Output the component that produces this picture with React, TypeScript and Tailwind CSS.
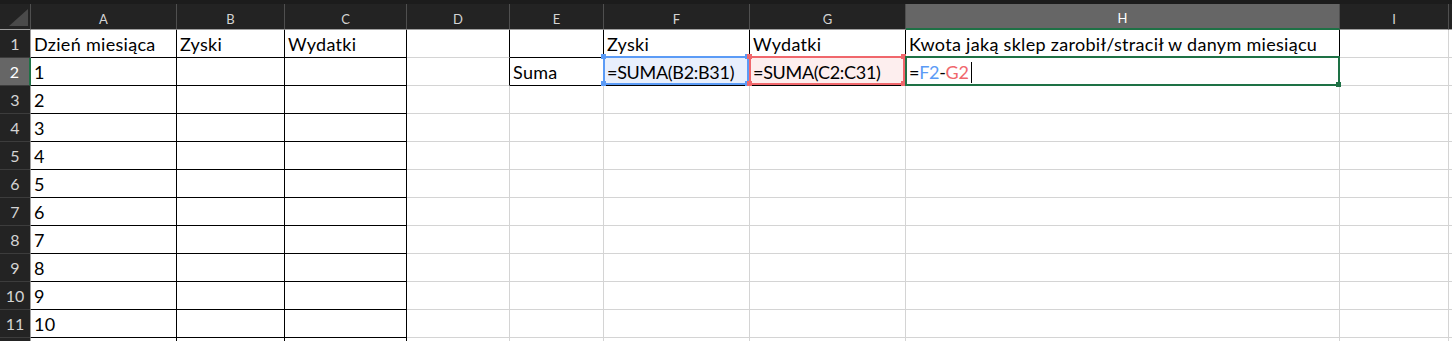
import React from "react";

const LETTERS = ["A", "B", "C", "D", "E", "F", "G", "H", "I", "J"];
const ROWS = 12;

const GRID =
  "grid grid-cols-[31px_146px_108px_122px_103px_94px_146px_156px_434px_109px_1fr]";

// teksty w komórkach, klucz: "wiersz-kolumna" (kolumna 0 = A)
const cells: Record<string, React.ReactNode> = {
  "1-0": "Dzień miesiąca",
  "1-1": "Zyski",
  "1-2": "Wydatki",
  "1-5": "Zyski",
  "1-6": "Wydatki",
  "1-7": "Kwota jaką sklep zarobił/stracił w danym miesiącu",
  "2-4": "Suma",
  "2-5": "=SUMA(B2:B31)",
  "2-6": "=SUMA(C2:C31)",
  "2-7": (
    <>
      =<span className="text-[#5b9bf6]">F2</span>-
      <span className="text-[#f0676c]">G2</span>
      <span className="ml-[2px] inline-block h-[21px] w-[1px] bg-black align-middle" />
    </>
  ),
};
// wiersz 12 jest prawie cały ucięty, więc bez tekstu
for (let r = 2; r < ROWS; r++) cells[`${r}-0`] = String(r - 1);

const formulas = new Set(["2-5", "2-6", "2-7"]);

function blackRight(r: number, c: number) {
  if (c <= 2) return true;
  if (r <= 2 && c >= 3 && c <= 7) return true;
  return false;
}

function blackBottom(r: number, c: number) {
  if (c <= 2) return true;
  if (r <= 2 && c >= 4 && c <= 7) return true;
  return false;
}

function Corner() {
  return (
    <div className="flex h-[26px] items-end justify-end border-r border-b border-r-[#4f4f4f] border-b-[#a0a0a0] bg-[#232323] pr-[2px] pb-[3px]">
      <svg width="19" height="17" viewBox="0 0 19 17">
        <polygon points="19,0 19,17 0,17" fill="#4a4a4a" />
      </svg>
    </div>
  );
}

function ColHeader({ letter }: { letter: string }) {
  const active = letter === "H";
  return (
    <div
      className={
        active
          ? "flex h-[26px] items-end justify-center border-r border-b-2 border-r-[#4f4f4f] border-b-[#1e7145] bg-[#666666] pb-[2px] text-[13px] leading-[16px] text-white"
          : "flex h-[26px] items-end justify-center border-r border-b border-r-[#4f4f4f] border-b-[#a0a0a0] bg-[#232323] pb-[2px] text-[13px] leading-[16px] text-[#d4d4d4]"
      }
    >
      {letter === "J" ? "" : letter}
    </div>
  );
}

function RowHeader({ n }: { n: number }) {
  const active = n === 2;
  return (
    <div
      className={
        active
          ? "flex h-[28px] items-center justify-center border-r-2 border-b border-r-[#1e7145] border-b-[#3c3c3c] bg-[#666666] pt-[1px] text-[16px] leading-[20px] text-white"
          : "flex h-[28px] items-center justify-center border-r border-b border-r-[#a0a0a0] border-b-[#3c3c3c] bg-[#232323] pt-[1px] text-[16px] leading-[20px] text-[#d4d4d4]"
      }
    >
      {n < ROWS ? n : ""}
    </div>
  );
}

function BlueRange() {
  return (
    <div className="pointer-events-none absolute -top-[2px] right-0 bottom-0 -left-[1px] z-10">
      <div className="absolute inset-0 border-2 border-[#5b9bf6]" />
      <div className="absolute -top-[2px] -left-[2px] h-[5px] w-[5px] bg-[#5b9bf6]" />
      <div className="absolute -top-[2px] -right-[1px] h-[5px] w-[5px] bg-[#5b9bf6]" />
      <div className="absolute -bottom-[1px] -left-[2px] h-[5px] w-[5px] bg-[#5b9bf6]" />
      <div className="absolute -right-[1px] -bottom-[1px] h-[5px] w-[5px] bg-[#5b9bf6]" />
    </div>
  );
}

function RedRange() {
  return (
    <div className="pointer-events-none absolute -top-[2px] right-0 bottom-0 -left-[1px] z-20">
      <div className="absolute inset-0 border-2 border-[#f0676c]" />
      <div className="absolute -top-[2px] -left-[2px] h-[5px] w-[5px] bg-[#f0676c]" />
      <div className="absolute -top-[2px] -right-[1px] h-[5px] w-[5px] bg-[#f0676c]" />
      <div className="absolute -bottom-[1px] -left-[2px] h-[5px] w-[5px] bg-[#f0676c]" />
      <div className="absolute -right-[1px] -bottom-[1px] h-[5px] w-[5px] bg-[#f0676c]" />
    </div>
  );
}

function ActiveCell() {
  return (
    <div className="pointer-events-none absolute -top-[2px] -right-[1px] -bottom-[1px] -left-[1px] z-30">
      <div className="absolute inset-0 border-2 border-[#1e7145]" />
      <div className="absolute -right-[1px] -bottom-[1px] h-[5px] w-[5px] bg-[#1e7145]" />
    </div>
  );
}

function Cell({ r, c }: { r: number; c: number }) {
  const key = `${r}-${c}`;
  const right = blackRight(r, c) ? "border-r-black" : "border-r-[#d4d4d4]";
  const bottom = blackBottom(r, c) ? "border-b-black" : "border-b-[#d4d4d4]";
  const font = formulas.has(key)
    ? "text-[18px] tracking-[-0.3px]"
    : "text-[18px] tracking-[0.3px]";
  let bg = "bg-white";
  if (key === "2-5") bg = "bg-[#e8effc]";
  if (key === "2-6") bg = "bg-[#fdeeee]";

  return (
    <div
      className={`relative flex h-[28px] items-center whitespace-nowrap border-r border-b pt-[1px] pl-[3px] leading-[20px] text-black ${font} ${right} ${bottom} ${bg}`}
    >
      {cells[key]}
      {key === "2-5" && <BlueRange />}
      {key === "2-6" && <RedRange />}
      {key === "2-7" && <ActiveCell />}
    </div>
  );
}

export default function App() {
  return (
    <div className="h-[341px] w-[1452px] overflow-hidden bg-white [font-family:Lato,'Noto_Sans',sans-serif]">
      <div className="h-[4px] bg-[#1c1c1c]" />
      <div className={GRID}>
        <Corner />
        {LETTERS.map((l) => (
          <ColHeader key={l} letter={l} />
        ))}
        {Array.from({ length: ROWS }, (_, i) => i + 1).map((r) => (
          <React.Fragment key={r}>
            <RowHeader n={r} />
            {LETTERS.map((_, c) => (
              <Cell key={c} r={r} c={c} />
            ))}
          </React.Fragment>
        ))}
      </div>
    </div>
  );
}
